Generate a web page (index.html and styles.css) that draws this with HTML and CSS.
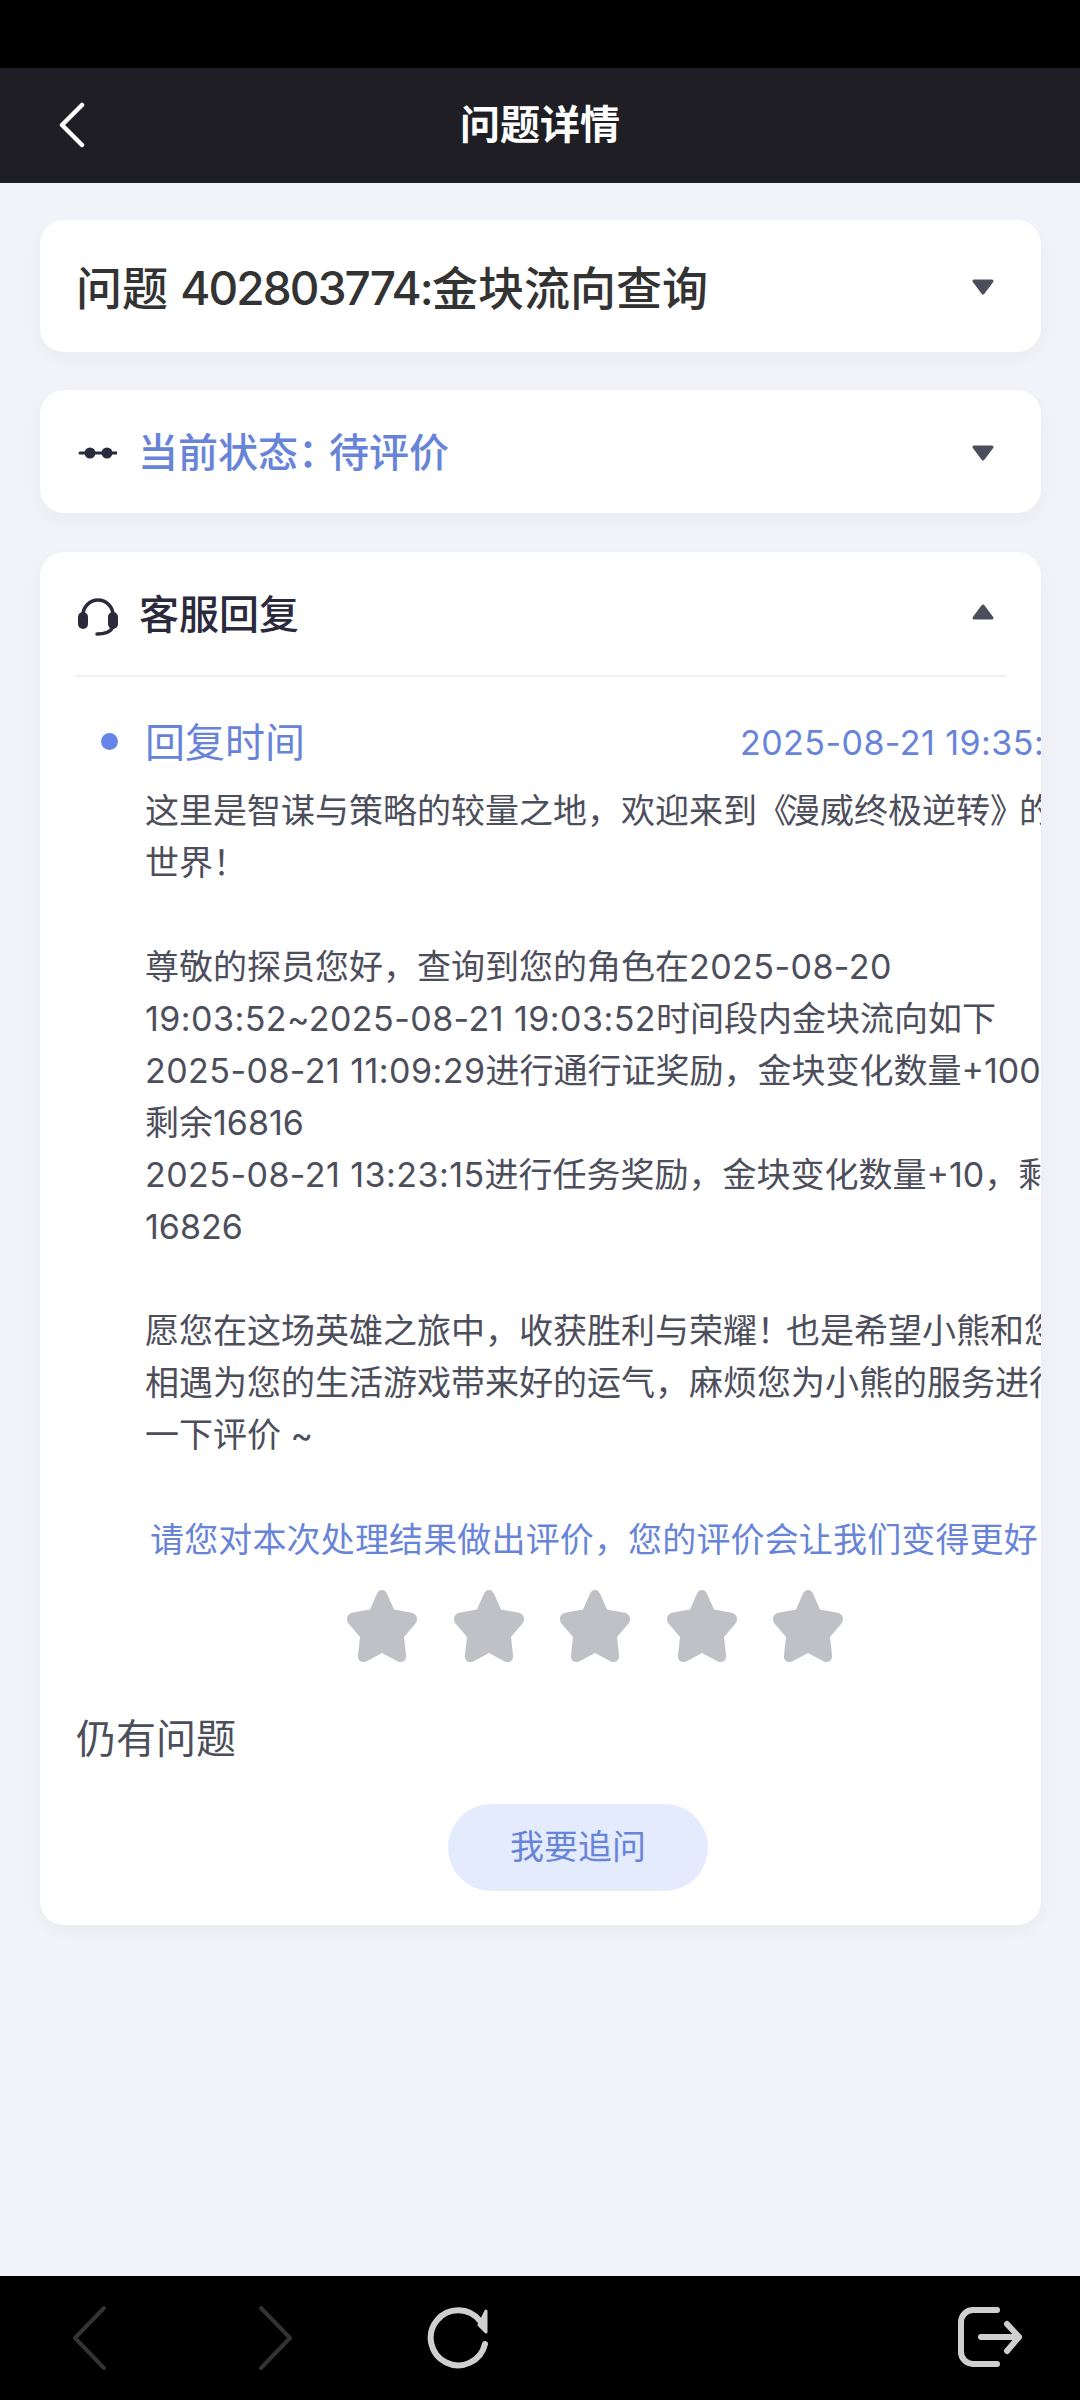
FILE: index.html
```html
<!DOCTYPE html>
<html lang="zh-CN">
<head>
<meta charset="utf-8">
<title>问题详情</title>
<link rel="stylesheet" href="styles.css">
</head>
<body>
<div class="app">
  <div class="statusbar"></div>
  <header class="nav">
    <svg class="nav-back" viewBox="0 0 30 46"><path d="M26 3 6 23l20 20" /></svg>
    <h1 class="nav-title">问题详情</h1>
  </header>
  <main class="content">
    <section class="card card-title">
      <div class="issue-title">问题 <span class="issue-num">402803774:</span>金块流向查询</div>
      <svg class="caret" viewBox="0 0 24 18"><path d="M3 3h18l-9 12z"/></svg>
    </section>
    <section class="card card-status">
      <svg class="head-icon" viewBox="0 0 40 40"><path class="dots" d="M3 21h37"/><circle cx="13" cy="21" r="5.500"/><circle cx="30" cy="21" r="5.500"/></svg>
      <div class="status-text">当前状态<span class="colon">：</span>待评价</div>
      <svg class="caret" viewBox="0 0 24 18"><path d="M3 3h18l-9 12z"/></svg>
    </section>
    <section class="card card-reply">
      <div class="reply-head">
        <svg class="head-icon head-icon-low" viewBox="0 0 42 42"><path class="band" d="M6 20v-1a15 15 0 0 1 30 0v1"/><rect x="1" y="16" width="10" height="17" rx="5"/><rect x="31" y="16" width="10" height="17" rx="5"/><path class="band" d="M35 32c-1 3.500-7 6-15 6"/></svg>
        <div class="reply-title">客服回复</div>
        <svg class="caret caret-up" viewBox="0 0 24 18"><path d="M3 3h18l-9 12z"/></svg>
      </div>
      <div class="reply-time">
        <span class="dot"></span>
        <span class="time-label">回复时间</span>
        <span class="time-value num">2025-08-21 19:35:12</span>
      </div>
      <div class="reply-body">这里是智谋与策略的较量之地，欢迎来到<span class="tight">《</span>漫威终极逆转<span class="tight">》</span>的
世界！

尊敬的探员您好，查询到您的角色在<span class="num">2025-08-20</span>
<span class="num">19:03:52~2025-08-21 19:03:52</span>时间段内金块流向如下
<span class="num">2025-08-21 11:09:29</span>进行通行证奖励，金块变化数量+100，
剩余16816
<span class="num">2025-08-21 13:23:15</span>进行任务奖励，金块变化数量+10，剩余
16826

愿您在这场英雄之旅中，收获胜利与荣耀<span class="tight">！</span>也是希望小熊和您的
相遇为您的生活游戏带来好的运气，麻烦您为小熊的服务进行
一下评价 ~</div>
      <div class="rate-text">请您对本次处理结果做出评价，您的评价会让我们变得更好</div>
      <div class="stars">
        <svg class="star" viewBox="0 0 72 72"><path d="M36 0c3 0 4.500 2 5.600 5l6.400 14.500 16.500 3c4 .8 6.500 3 6.500 6.500 0 2.500-1 4.200-3 6.200L58 47l2 18c.5 4-1.500 7-5 7-1.800 0-3.200-.6-5-1.600L36 63 22 70.400c-1.800 1-3.200 1.600-5 1.600-3.500 0-5.500-3-5-7l2-18L4 35.200C2 33.200 1 31.500 1 29c0-3.500 2.500-5.700 6.500-6.500l16.500-3L30.400 5C31.500 2 33 0 36 0z"/></svg>
        <svg class="star" viewBox="0 0 72 72"><path d="M36 0c3 0 4.500 2 5.600 5l6.400 14.500 16.500 3c4 .8 6.500 3 6.500 6.500 0 2.500-1 4.200-3 6.200L58 47l2 18c.5 4-1.500 7-5 7-1.800 0-3.200-.6-5-1.600L36 63 22 70.400c-1.800 1-3.200 1.600-5 1.600-3.500 0-5.500-3-5-7l2-18L4 35.200C2 33.200 1 31.500 1 29c0-3.500 2.500-5.700 6.500-6.500l16.500-3L30.400 5C31.500 2 33 0 36 0z"/></svg>
        <svg class="star" viewBox="0 0 72 72"><path d="M36 0c3 0 4.500 2 5.600 5l6.400 14.500 16.500 3c4 .8 6.500 3 6.500 6.500 0 2.500-1 4.200-3 6.200L58 47l2 18c.5 4-1.500 7-5 7-1.800 0-3.200-.6-5-1.600L36 63 22 70.400c-1.800 1-3.200 1.600-5 1.600-3.500 0-5.500-3-5-7l2-18L4 35.200C2 33.200 1 31.500 1 29c0-3.500 2.500-5.700 6.500-6.500l16.500-3L30.400 5C31.500 2 33 0 36 0z"/></svg>
        <svg class="star" viewBox="0 0 72 72"><path d="M36 0c3 0 4.500 2 5.600 5l6.400 14.500 16.500 3c4 .8 6.500 3 6.500 6.500 0 2.500-1 4.200-3 6.200L58 47l2 18c.5 4-1.500 7-5 7-1.800 0-3.200-.6-5-1.600L36 63 22 70.400c-1.800 1-3.200 1.600-5 1.600-3.500 0-5.500-3-5-7l2-18L4 35.200C2 33.200 1 31.500 1 29c0-3.500 2.500-5.700 6.500-6.500l16.500-3L30.400 5C31.500 2 33 0 36 0z"/></svg>
        <svg class="star" viewBox="0 0 72 72"><path d="M36 0c3 0 4.500 2 5.600 5l6.400 14.500 16.500 3c4 .8 6.500 3 6.500 6.500 0 2.500-1 4.200-3 6.200L58 47l2 18c.5 4-1.500 7-5 7-1.800 0-3.200-.6-5-1.600L36 63 22 70.400c-1.800 1-3.200 1.600-5 1.600-3.500 0-5.500-3-5-7l2-18L4 35.200C2 33.200 1 31.500 1 29c0-3.500 2.500-5.700 6.500-6.500l16.500-3L30.400 5C31.500 2 33 0 36 0z"/></svg>
      </div>
      <div class="still">仍有问题</div>
      <div class="follow"><span class="follow-btn">我要追问</span></div>
    </section>
  </main>
  <footer class="toolbar">
    <svg class="tool tool-nav" viewBox="0 0 36 66"><path d="M33 3 4 33l29 30"/></svg>
    <svg class="tool tool-nav tool-next" viewBox="0 0 36 66"><path d="M3 3l29 30L3 63"/></svg>
    <svg class="tool tool-reload" viewBox="0 0 66 66"><path d="M60 39A27.500 27.500 0 1 1 55 16"/><path class="fill" d="M61 6v21l-7-7z"/></svg>
    <span class="tool-gap"></span>
    <svg class="tool tool-exit" viewBox="0 0 66 66"><path d="M40 5H16A12 12 0 0 0 4 17v30a12 12 0 0 0 12 12h24"/><path d="M24 32h38M50 19l12 13-12 14"/></svg>
  </footer>
</div>
</body>
</html>
```
FILE: styles.css
```css
* { box-sizing: border-box; }
html, body { margin: 0; padding: 0; }
body { font-family: "Inter", "Noto Sans CJK SC", "Noto Sans", sans-serif; background: #f1f3f8; }
.app { width: 1080px; height: 2400px; display: flex; flex-direction: column; overflow: hidden; }
.statusbar { height: 68px; background: #000; flex: none; }
.nav { height: 115px; flex: none; background: #1e1e24; display: flex; align-items: center; justify-content: center; position: relative; }
.nav-back { position: absolute; left: 56px; top: 34px; width: 30px; height: 46px; fill: none; stroke: #fff; stroke-width: 4.500; stroke-linecap: round; stroke-linejoin: round; }
.nav-title { margin: 0; color: #fff; font-size: 40px; font-weight: 700; line-height: 50px; padding-bottom: 2px; }
.content { flex: 1; padding: 37px 39px 0 40px; display: flex; flex-direction: column; }
.card { background: #fff; border-radius: 24px; box-shadow: 0 6px 16px rgba(40, 50, 90, .04); overflow: hidden; }
.card-title { height: 132px; margin-bottom: 38px; padding: 0 46px 0 36px; display: flex; align-items: center; justify-content: space-between; }
.issue-title { font-size: 46px; font-weight: 500; line-height: 60px; color: #333; padding-top: 4px; }
.issue-num { letter-spacing: -1.900px; }
.caret { width: 24px; height: 18px; fill: #4d4e5c; stroke: #4d4e5c; stroke-width: 3; stroke-linejoin: round; flex: none; transform: translateY(1px); }
.card-status { height: 123px; margin-bottom: 39px; padding: 0 46px 0 37px; display: flex; align-items: center; }
.head-icon { width: 40px; height: 40px; flex: none; margin-right: 21px; fill: #2a2a3c; stroke: none; }
.head-icon-low { width: 42px; height: 42px; margin: 6px 20px 0 0; }
.dots { fill: none; stroke: #2a2a3c; stroke-width: 3; stroke-linecap: round; }
.status-text { flex: 1; font-size: 40px; line-height: 56px; color: #6784d8; font-weight: 500; padding-top: 3px; }
.colon { letter-spacing: -9px; }
.card-reply { height: 1373px; }
.reply-head { height: 125px; margin: 0 35px; padding: 0 11px 0 2px; border-bottom: 2px solid #f0f0f3; display: flex; align-items: center; }
.band { fill: none; stroke: #2a2a3c; stroke-width: 3.500; stroke-linecap: round; }
.reply-title { flex: 1; font-size: 40px; font-weight: 500; line-height: 56px; color: #2a2a3c; padding-top: 3px; }
.caret-up { transform: translateY(-2px) rotate(180deg); }
.reply-time { display: flex; align-items: center; height: 56px; margin-top: 38px; padding-left: 61px; white-space: nowrap; }
.dot { width: 17px; height: 17px; border-radius: 50%; background: #6585e8; flex: none; margin: -4px 27px 0 0; }
.time-label { font-size: 40px; line-height: 56px; color: #6784d8; width: 595px; flex: none; }
.time-value { font-size: 34px; line-height: 56px; color: #6784d8; flex: none; }
.num { letter-spacing: .45px; }
.tight { letter-spacing: -5px; }
.reply-body { margin: 14px 0 0 105px; font-size: 34px; line-height: 52px; color: #4d4e5c; white-space: pre; }
.rate-text { margin: 53px 0 0 110px; font-size: 34px; letter-spacing: .15px; line-height: 52px; color: #6784d8; white-space: nowrap; }
.stars { display: flex; gap: 34.500px; margin: 24px 0 0 306px; }
.star { width: 72px; height: 72px; fill: #c0c1c6; flex: none; }
.still { margin: 49px 0 0 36px; font-size: 40px; line-height: 56px; color: #4d4e5c; }
.follow { display: flex; margin-top: 37px; padding-left: 408px; }
.follow-btn { width: 260px; height: 87px; border-radius: 44px; background: #e4ebfd; color: #6784d8; font-size: 34px; line-height: 85px; text-align: center; }
.toolbar { height: 124px; flex: none; background: #000; display: flex; align-items: center; padding: 0 57px 0 71px; }
.tool { fill: none; stroke-linecap: round; stroke-linejoin: round; flex: none; }
.tool-nav { width: 36px; height: 66px; stroke: #333; stroke-width: 4; }
.tool-next { margin-left: 151px; }
.tool-reload { width: 66px; height: 66px; margin-left: 131px; stroke: #cfcfcf; stroke-width: 6; }
.tool-reload .fill { fill: #cfcfcf; stroke-width: 3; }
.tool-gap { flex: 1; }
.tool-exit { width: 66px; height: 66px; stroke: #cfcfcf; stroke-width: 6; }
```
